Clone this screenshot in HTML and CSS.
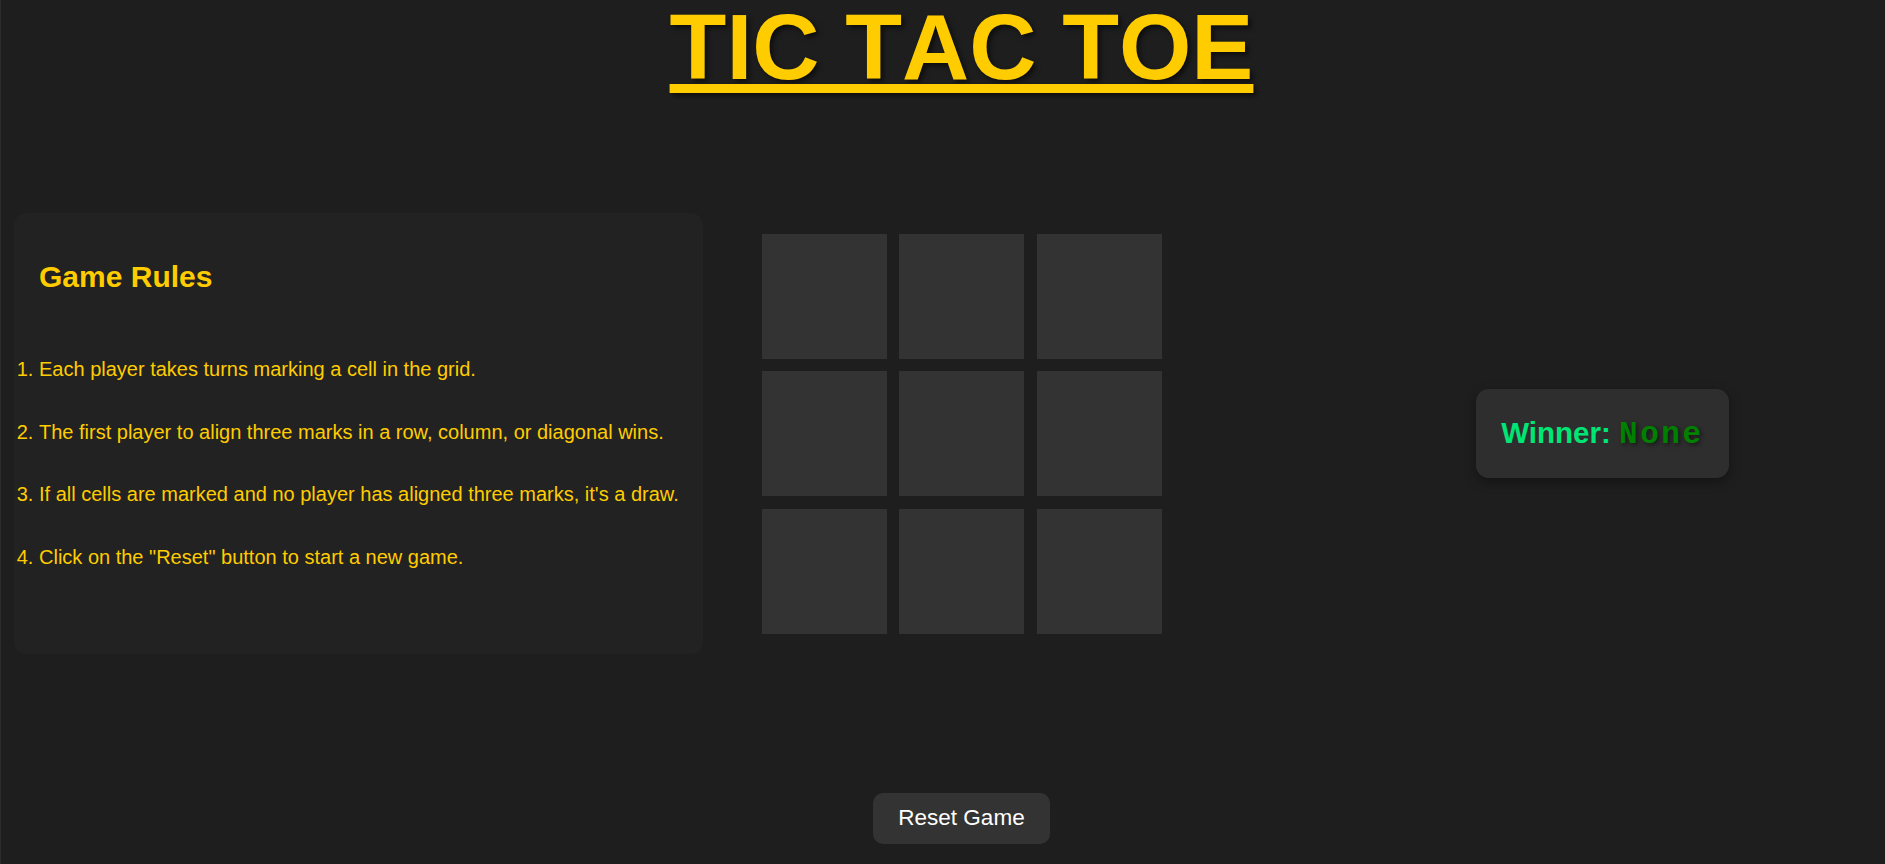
FILE: index.html
```html
<!DOCTYPE html>
<html lang="en">
<head>
<meta charset="utf-8">
<title>Tic Tac Toe</title>
<link rel="stylesheet" href="styles.css">
</head>
<body>
<div class="page">
  <h1 class="title">TIC TAC TOE</h1>
  <div class="main">
    <section class="rules">
      <h2 class="rules-title">Game Rules</h2>
      <ol class="rules-list">
        <li>Each player takes turns marking a cell in the grid.</li>
        <li>The first player to align three marks in a row, column, or diagonal wins.</li>
        <li>If all cells are marked and no player has aligned three marks, it's a draw.</li>
        <li>Click on the "Reset" button to start a new game.</li>
      </ol>
    </section>
    <div class="board">
      <div class="cell"></div>
      <div class="cell"></div>
      <div class="cell"></div>
      <div class="cell"></div>
      <div class="cell"></div>
      <div class="cell"></div>
      <div class="cell"></div>
      <div class="cell"></div>
      <div class="cell"></div>
    </div>
    <div class="winner">Winner: <span class="winner-name">None</span></div>
  </div>
  <div class="actions">
    <button class="reset">Reset Game</button>
  </div>
</div>
</body>
</html>
```

FILE: styles.css
```css
html, body {
  margin: 0;
  padding: 0;
  background: #1e1e1e;
  overflow: hidden;
}

body {
  font-family: "Liberation Sans", Arial, sans-serif;
  box-shadow: inset 1px 0 0 #2c2c2c;
  min-height: 864px;
}

.page {
  width: 1923px;
}

.title {
  margin: 0;
  padding-top: 1px;
  text-align: center;
  font-size: 93px;
  line-height: 93px;
  font-weight: bold;
  font-kerning: none;
  color: #ffcc00;
  text-decoration: underline;
  text-decoration-thickness: 9px;
  text-underline-offset: 5px;
  text-shadow: 3px 3px 5px rgba(0, 0, 0, 0.55);
}

.main {
  margin-top: 119px;
  display: grid;
  grid-template-columns: 641px 641px 641px;
  align-items: center;
}

.rules {
  justify-self: start;
  margin-left: 14px;
  width: 689px;
  box-sizing: border-box;
  padding: 25px;
  background: #222222;
  border-radius: 12px;
  color: #ffcc00;
}

.rules-title {
  margin: 21.5px 0 0;
  font-size: 30px;
  font-weight: bold;
}

.rules-list {
  margin: 64.4px 0 60px;
  padding: 0;
  list-style: decimal outside;
  font-size: 20px;
  white-space: nowrap;
  display: flex;
  flex-direction: column;
  gap: 39.8px;
}

.board {
  justify-self: center;
  display: grid;
  grid-template-columns: repeat(3, 125px);
  grid-auto-rows: 125px;
  gap: 12.5px;
}

.cell {
  background: #333333;
}

.winner {
  justify-self: center;
  padding: 24px 25px;
  background: #2e2e2e;
  border-radius: 12.5px;
  box-shadow: 0 4px 12px rgba(0, 0, 0, 0.35);
  color: #00e676;
  font-size: 29.5px;
  line-height: 39.5px;
  font-weight: bold;
  white-space: nowrap;
}

.winner-name {
  font-family: "Liberation Mono", "Courier New", monospace;
  font-size: 31px;
  letter-spacing: 2.6px;
  color: #008000;
  text-shadow: 2px 2px 4px rgba(0, 0, 0, 0.5);
}

.actions {
  margin-top: 138.5px;
  display: flex;
  justify-content: center;
}

.reset {
  font-family: "Liberation Sans", Arial, sans-serif;
  font-size: 22.5px;
  padding: 12.5px 25px;
  border: none;
  border-radius: 10px;
  background: #333333;
  color: #ffffff;
  line-height: normal;
}
```
